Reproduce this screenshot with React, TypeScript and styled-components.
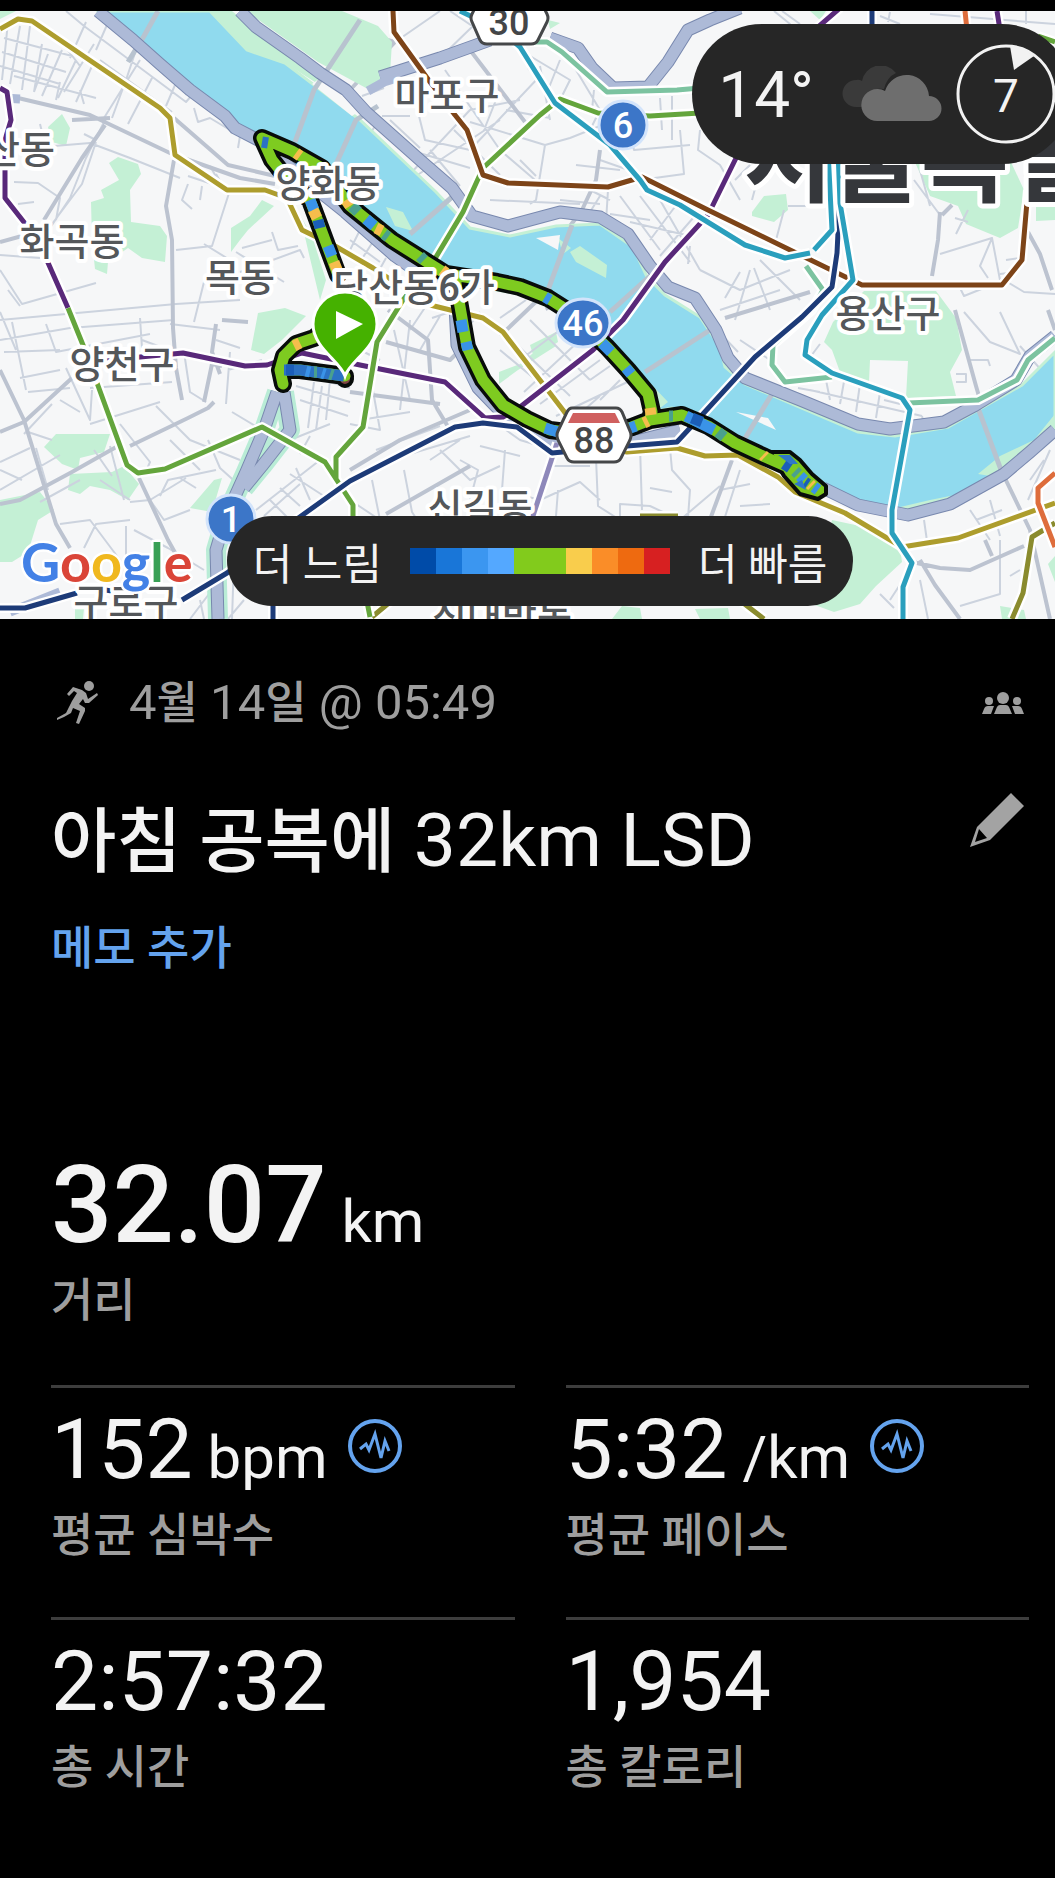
import React from "react";
import styled, { createGlobalStyle } from "styled-components";

type Stroke = { color: string; d: string };

const parks = [
  "M48 127 L62 114 L70 128 L66 146 L52 142Z",
  "M109 163 L118 157 L138 164 L141 174 L130 190 L131 222 L160 226 L167 236 L165 262 L142 258 L128 248 L108 262 L107 274 L95 269 L92 240 L91 202 L104 198 L101 190 L119 180Z",
  "M0 11 L16 11 L0 19Z",
  "M231 228 L250 216 L262 200 L274 206 L248 230 L240 240 L231 252Z",
  "M258 313 L285 308 L306 316 L282 340 L264 354 L251 350Z",
  "M300 215 L312 236 L326 280 L320 300 L308 250Z",
  "M44 447 L56 434 L110 434 L104 452 L80 458 L78 470 L62 464Z",
  "M70 474 L112 472 L124 466 L139 484 L128 500 L110 490 L90 486 L80 494 L68 490Z",
  "M0 500 L40 492 L54 510 L38 520 L28 552 L12 562 L0 562Z",
  "M190 508 L214 480 L222 478 L212 512Z",
  "M548 20 L560 23 L550 29Z",
  "M499 372 L520 364 L550 339 L556 346 L518 370 L499 384Z M530 345 L556 332 L558 342 L534 358Z",
  "M752 212 L764 196 L786 194 L788 210 L774 222 L752 216Z",
  "M914 160 L1010 160 L1024 190 L1018 228 L1000 238 L966 224 L958 206 L930 196Z",
  "M1036 206 L1055 204 L1055 220 L1036 221Z",
  "M864 291 L936 291 L956 318 L962 350 L950 372 L956 396 L906 398 L908 361 L870 360 L869 382 L840 372 L832 350 L824 342 L833 322Z",
  "M832 520 L860 526 L900 548 L902 562 L876 586 L860 604 L834 612 L812 604Z",
  "M612 619 L622 606 L640 608 L642 619Z M695 609 L728 608 L730 619 L700 619Z",
  "M1000 606 L1024 610 L1026 619 L1002 619Z M1048 564 L1055 556 L1055 582Z",
  "M810 11 L826 11 L820 20Z M75 606 L84 608 L83 619 L75 619Z",
];

const riverside = [
  "M210 11 L228 30 L247 50 L285 63 L318 84 L325 80 L300 60 L255 30 L232 11Z",
  "M246 11 L342 11 L378 26 L392 42 L390 74 L366 88 L318 62Z",
  "M570 252 L580 246 L607 265 L606 278 L576 262Z M558 238 L571 248 L563 254Z",
  "M386 207 L403 212 L413 231 L395 226Z",
  "M651 384 L668 402 L655 412Z",
  "M978 474 L1000 456 L1034 440 L1055 414 L1055 432 L1028 453 L990 476Z",
  "M896 508 L930 500 L960 494 L946 504 L908 513Z",
];

const sandbars =
  "M536 238 L560 235 L558 250Z M736 412 L768 418 L776 430Z M946 500 L960 492 L972 486 L962 500Z M312 84 L320 78 L358 112 L352 116Z";

const river =
  "M98 11 L140 46 L190 92 L235 126 L262 140 L300 172 L345 205 L400 254 L450 282 L520 294 L560 312 L610 355 L652 412 L672 408 L706 424 L765 456 L822 488 L858 508 L908 514 L948 504 L1002 474 L1028 454 L1055 433 L1055 352 L1022 385 L978 410 L948 427 L895 436 L858 432 L745 384 L725 367 L720 347 L700 317 L665 295 L647 277 L633 247 L600 224 L556 226 L510 236 L470 228 L436 192 L360 120 L318 88 L285 63 L247 50 L228 30 L210 11Z";

const highways = [
  "M98 11 L133 40 L160 64 L190 90 L225 116 L235 128 L262 142 L300 176 L345 212 L395 256 L440 288",
  "M240 11 L256 27 L300 58 L320 73 L346 90 L366 112 L420 160 L452 188 L472 216 L508 226 L560 212 L600 217 L628 234 L650 266 L668 287 L695 298 L716 330 L728 358 L745 378 L800 400 L858 424 L890 429 L944 422 L974 406 L1016 380 L1030 356 L1055 336",
  "M380 77 L440 58 L490 40",
  "M550 38 L578 48 L592 68 L613 88 L648 87 L668 62 L688 30 L710 20 L740 8",
  "M455 305 L457 345 L478 388 L505 416 L550 440 L590 448 L640 440 L680 430",
  "M823 488 L858 505 L908 515 L950 504 L1004 474 L1030 452 L1055 430",
];

const streamRoads = [
  "M277 392 L264 430 L246 472 L226 516 L216 550 L218 619",
  "M284 392 L290 430 L262 466 L244 488",
];

// arterial streets
const mediumRoads =
  "M18 98 L90 115 L172 154 L240 178 L275 184 M174 118 L228 165 L275 176 M105 125 L82 158 L44 220 M174 160 L166 206 L172 240 L173 328 L176 368 L182 400 M0 242 L22 236 M0 432 L24 422 L72 378 M0 370 L24 420 L56 524 L70 548 M0 504 L20 500 L72 472 L118 446 M139 478 L168 540 L178 558 M72 120 L110 118 M130 446 L188 418 L208 408 L214 402 M216 324 L212 352 L220 374 M222 320 L248 322 M204 402 L212 364 L222 366 M350 90 L395 42 L350 30 M600 150 L596 180 L582 210 L570 226 L548 286 M470 50 L525 122 M500 336 L543 295 L548 310 M350 470 L400 440 L470 410 M350 392 L440 404 M388 310 L428 340 L432 400 L450 430 M386 342 L450 360 L460 350 M386 514 L470 466 M695 560 L732 460 M940 212 L938 240 L932 276 M942 215 L952 205 M955 310 L976 386 L1000 468 L1030 530 L1050 619 M912 562 L940 568 L970 570 L1024 546 M920 560 L935 585 L960 619 M985 540 L992 556 M725 318 L810 292 M1028 232 L1040 254 L1052 290 M1048 310 L1055 330";

const minorRoads = [
  // northwest blocks
  "M8 22 L2 80 M20 26 L10 84 M30 26 L22 90 M42 44 L34 92 M4 38 L72 56 M2 52 L66 72 M0 66 L60 84 M14 76 L96 98 M48 54 L34 92 M62 50 L42 96 M76 60 L58 98 M92 66 L76 102 M86 22 L70 58 M60 40 L80 66 M94 44 L64 92 M66 11 L84 26 L186 102 L192 95 M110 18 L96 50 M128 28 L150 34 M140 60 L104 118 M152 78 L128 124 M136 50 L126 80 L112 118 M100 60 L172 112 M178 78 L166 106 M60 82 L56 100 M80 90 L84 104",
  "M54 146 L90 143 L130 158 L180 178 M104 122 L86 158 L70 198 L42 240 M14 182 L38 183 L60 198 L56 220 M18 204 L34 202 M40 124 L42 132 M84 134 L96 140 M96 142 L82 184 L52 224 M0 255 L40 258 M0 270 L22 304 L96 283 M0 312 L16 350 M8 290 L20 306",
  "M194 108 L198 122 L210 118 L240 136 L238 148 M188 176 L230 190 L212 246 L176 250 M188 184 L182 200 L192 209 M202 186 L200 200 M210 166 L218 180 M216 174 L224 188 M204 244 L230 260 M236 252 L284 282 M242 248 L272 240 M240 272 L300 250 L304 258 M250 262 L262 268 M206 274 L194 322 M272 232 L278 250 L298 246",
  // west side
  "M0 320 L176 304 L240 300 M0 340 L70 328 L174 320 M12 322 L26 390 M46 324 L56 352 L150 334 M80 330 L84 360 M140 318 L142 348 M4 352 L60 350 M66 368 L90 420 L92 390 M20 378 L60 370 M28 392 L70 388 M90 388 L172 382 M90 424 L160 402 M142 340 L190 358 M170 324 L220 330 M184 352 L190 392 L206 402 M216 340 L240 348 M230 352 L226 404 M24 434 L52 404 M28 432 L52 440 M60 400 L80 412 M120 424 L150 462 L144 476 M156 406 L190 440 L240 460",
  "M0 462 L30 448 M0 490 L60 455 M36 448 L48 490 M0 470 L22 480 M40 502 L80 480 M60 524 L90 520 L120 560 M84 548 L96 524 L130 520 M126 526 L126 560 M130 502 L150 500 L186 478 M150 500 L164 520 L190 510 M160 496 L168 480 L216 470 M134 530 L168 548 L204 570 M100 480 L130 500 M94 450 L112 476 M110 446 L124 500 M208 440 L220 468 L240 486 M170 440 L200 470 M180 478 L196 488",
  "M232 412 L262 430 M228 370 L262 360 M296 372 L350 388 M296 386 L350 402 M300 400 L348 416 M314 382 L308 428 M322 386 L316 430 M330 380 L326 420 M290 440 L330 424 M300 454 L310 436 M256 510 L320 460 M264 516 L300 484 M270 500 L290 520 M280 488 L300 506 M290 474 L330 500 M296 468 L310 500 M236 520 L248 540 M234 560 L232 619 M244 600 L228 619 M190 619 L212 590 M200 600 L204 619",
  // north
  "M410 80 L425 140 L470 150 L540 76 M395 190 L470 110 L520 100 M382 116 L410 116 M410 180 L500 120 M445 70 L500 150 L535 180 M362 96 L384 88 M530 56 L570 80 L560 100 M560 60 L548 90 L528 68 M470 122 L545 145 L570 138 L600 126 M545 145 L536 200 L530 204 M500 90 L484 130 M490 200 L580 204 M520 160 L536 176 M540 66 L550 120 M398 40 L440 11 M440 58 L475 24 M484 34 L450 11 M570 60 L600 110 L590 130",
  "M416 152 L470 168 M430 150 L460 186 M360 150 L380 118 M420 148 L390 120 M454 130 L500 175 M506 110 L550 118 M592 110 L594 90 M626 116 L634 150 L690 145 M660 98 L662 130 M680 130 L684 174 L640 180 M672 96 L672 140 M600 160 L640 174 M576 165 L620 170 M590 190 L610 200 M560 200 L600 204 M608 190 L606 222 M620 196 L660 250 M640 196 L690 262 M660 200 L700 270 M680 200 L650 240 M700 210 L660 256 M630 222 L690 236 M610 214 L650 220 M690 246 L688 264 M585 220 L600 196",
  "M760 46 L790 24 L774 11 M782 11 L800 24 M880 16 L900 24 M890 12 L888 22 M930 14 L1055 24 M1026 11 L1026 24 M700 130 L698 150 L720 165 L740 200 M750 165 L735 180 M760 170 L752 200",
  // east
  "M788 206 L832 206 M784 210 L776 240 M700 270 L740 290 L790 270 M725 298 L740 272 M754 268 L770 310 M760 260 L800 300 M720 310 L780 290 M735 320 L750 270 M914 180 L940 215 M955 218 L968 222 M940 254 L992 238 L980 266 L988 278 M992 238 L1000 280 M1000 274 L1016 272 M1006 260 L1020 258 M920 170 L930 206 M968 210 L956 234 M958 284 L964 296 L1004 280 L1024 292 L1055 294",
  "M964 312 L990 342 L1020 354 L1000 312 M968 360 L988 360 L990 366 M1020 346 L1050 380 M956 374 L966 374 L966 382 L956 382 M700 312 L738 352 M740 340 L770 360 L786 330 M820 344 L808 360 M798 388 L820 392 M826 380 L830 400 M845 376 L840 404 M860 384 L856 412 M880 392 L876 418 M810 390 L922 416 M922 416 L924 424 M884 400 L900 404",
  "M970 510 L990 540 M976 520 L1002 510 M980 530 L1006 522 M990 500 L1000 536 M924 520 L928 548 M1000 540 L1000 594 L960 606 M880 594 L894 608 M890 600 L916 560 M920 580 L928 619 M1028 500 L1050 450 M1020 570 L1010 576 M1030 480 L1044 460",
  // south
  "M460 440 L430 460 M376 450 L440 426 M390 460 L470 436 M404 470 L412 512 L430 540 M440 450 L470 480 L500 466 M470 500 L478 470 L460 460 M506 430 L520 440 L540 446 M505 450 L502 490 L540 500 L580 482 L600 500 M546 466 L590 466 M558 490 L556 516 M596 458 L598 506 L620 520 L620 504 L650 506 L680 520 L720 486 M640 446 L642 510 M670 448 L672 470 L690 490 L688 518 M672 492 L650 488 M720 490 L750 484 M740 470 L724 520 M764 450 L780 480 M740 506 L770 504 M480 446 L520 456 M350 500 L380 520 L372 480",
  "M350 345 L380 360 M372 385 L380 430 L350 424 M394 330 L410 400 M410 320 L400 410 M360 420 L410 412 M440 316 L420 350 M500 350 L560 400 M512 340 L570 396 M530 320 L590 380 M524 392 L580 340 M540 404 L600 360 M520 360 L560 330 M576 320 L612 356 M590 380 L610 366 M556 416 L640 376 M568 424 L600 396 M600 400 L620 380 M430 300 L410 330 M450 312 L432 318 M480 312 L466 330 M526 300 L500 318",
  "M350 240 L380 262 M360 230 L350 250 M374 240 L360 262 M386 258 L376 276 M370 262 L400 280 M400 300 L420 280",
];

const bridges =
  "M158 11 L144 36 L128 62 M360 20 L314 90 L295 142 M378 106 L356 120 L336 164 M460 190 L410 234 M572 225 L548 290 M610 312 L650 276 M645 372 L710 330 M772 394 L744 440 M978 408 L1004 478";

const rails: Stroke[] = [
  { color: "#ad9d2d", d: "M0 29 L18 19 L32 21 L160 108 L170 118 L175 155 L227 190 L265 190 L287 198 L302 230 L335 246 L373 268 L430 305 L483 318 L503 332 L563 410 L585 440 L627 452 L677 448 L705 456 L738 455 L778 477 L795 492 L845 513 L902 547 L958 538 L1055 503" },
  { color: "#8a8b2e", d: "M1055 523 L1032 537 L1023 593 L1012 619 M742 602 L764 619 M372 617 L390 602 M640 516 L678 516" },
  { color: "#59297a", d: "M0 88 L7 92 L11 120 L5 140 L5 198 L38 240 L68 308 M95 362 L140 357 L183 353 L245 366 L267 365 L302 353 L360 365 L445 382 L485 418 L503 417 L520 407 L593 350 L623 320 L665 262 L708 215 L740 150 L780 60 L840 8 M997 11 L1000 30" },
  { color: "#64a53c", d: "M68 308 L85 350 L127 465 L138 473 L165 469 L262 427 L325 462 L353 505 L353 530 L370 617 M700 113 L650 116 L598 113 L560 99 L540 115 L483 168 L463 212 L433 262 L403 300 L377 342 L363 427 L336 457 L336 478 M1038 36 L1055 42" },
  { color: "#7d4418", d: "M393 11 L394 32 L430 82 L455 115 L467 130 L483 175 L508 183 L608 187 L642 177 L708 210 L862 285 L1002 285 L1022 260 L1028 190" },
  { color: "#7cc3a0", d: "M530 42 L547 42 L562 52 L607 92 L677 90 L700 88 M806 266 L823 290 L812 310 L773 345 L772 365 L785 382 L832 377 M908 403 L978 400 L1017 380 L1028 360 L1055 338" },
  { color: "#8e88ba", d: "M557 443 L530 525" },
  { color: "#de6d3c", d: "M1055 473 L1038 488 L1038 503 L1055 547 M965 11 L968 40" },
  { color: "#1d3b78", d: "M842 150 L837 253 L832 287 L802 317 L755 357 L702 415 L677 442 L627 446 L552 453 L517 427 L483 423 L455 427 L350 481 L290 524 L227 573 L182 600 M77 593 L25 608 L0 608 M273 600 L273 619 M872 11 L872 40 M105 590 L112 591" },
  { color: "#2a9fbd", d: "M460 11 L500 30 L520 47 L555 103 L610 145 L640 180 L647 190 L680 205 L745 245 L785 258 L810 253 M814 250 L832 230 L828 150 M838 150 L840 203 L853 280 L822 315 L807 340 L805 355 L832 373 L902 398 L910 410 L892 510 L892 533 L912 563 L903 587 L903 619" },
];

const routeLines = [
  "M344 314 L314 338 L296 344 L284 356 L280 370 L283 384",
  "M284 370 L300 370 L345 376",
  "M338 275 L322 232 L310 200 L288 180 L272 160 L262 138 L292 151 L322 168 L350 206 L392 240 L446 274 L497 282 L520 287 L548 298 L570 312 L607 347 L628 370 L648 394 L652 412 L650 418",
  "M455 278 L462 318 L467 347 L483 380 L503 405 L527 419 L550 430 L600 436 L632 427 L650 420 L682 415 L708 426 L735 443 L765 457 L790 468 L812 486 L817 489",
];

const routePaces: Stroke[] = [
  { color: "#2b72c4", d: "M262 142 L268 143 M284 370 L300 370 L344 376" },
  { color: "#3a93e8", d: "M310 200 L314 210 M328 246 L332 256 M330 178 L336 186 M366 219 L374 226 M461 320 L463 332 M466 342 L468 350 M545 297 L550 300 M602 343 L611 352 M626 368 L631 374 M545 428 L558 432 M630 428 L636 426 M686 416 L714 430 M800 476 L804 480 M814 487 L818 490 M306 371 L310 372 M322 373 L325 374" },
  { color: "#1b5eb8", d: "M318 220 L320 228 M692 418 L702 422 M784 464 L790 468 M805 482 L808 484 M286 370 L294 370" },
  { color: "#f6bd4c", d: "M313 210 L317 218 M334 262 L338 272 M296 153 L300 156 M346 200 L350 206 M294 346 L300 343 M376 228 L382 231 M650 408 L651 415 M644 423 L648 421 M763 455 L765 457 M442 270 L446 273 M810 484 L812 486" },
  { color: "#4aa08e", d: "M352 206 L358 212 M384 234 L388 237 M669 416 L673 416 M718 432 L724 437 M795 471 L798 474 M420 256 L424 260 M322 170 L326 174 M314 372 L317 372 M330 374 L333 375" },
];

const places = [
  { name: "마포구", x: 447, y: 109 },
  { name: "산동", x: 20, y: 163 },
  { name: "양화동", x: 328, y: 197 },
  { name: "화곡동", x: 72, y: 255 },
  { name: "목동", x: 240, y: 291 },
  { name: "당산동6가", x: 414, y: 301 },
  { name: "용산구", x: 888, y: 327 },
  { name: "양천구", x: 122, y: 378 },
  { name: "신길동", x: 480, y: 521 },
  { name: "구로구", x: 126, y: 616 },
  { name: "신대방동", x: 502, y: 630 },
];

const routeShields = [
  { label: "6", x: 623, y: 125, rx: 24 },
  { label: "46", x: 583, y: 323, rx: 27 },
  { label: "1", x: 231, y: 519, rx: 24 },
];

const googleLetters = [
  ["G", "#4381e6"],
  ["o", "#da4538"],
  ["o", "#f0b81e"],
  ["g", "#4381e6"],
  ["l", "#38a055"],
  ["e", "#da4538"],
];

const paceColors = [
  "#004ba8",
  "#1976d8",
  "#3b96f0",
  "#54a8ff",
  "#82cb1c",
  "#82cb1c",
  "#f9cd4c",
  "#fa8d28",
  "#ee6a10",
  "#d72021",
];

const RouteMap: React.FC = () => (
  <MapDrawing viewBox="0 11 1055 608" preserveAspectRatio="xMidYMid slice">
    <rect y="11" width="1055" height="608" fill="#f6f7f8" />
    <path d={parks.join(" ")} fill="#c4f0d5" />
    <RoadPath d={minorRoads.join(" ")} $color="#ccd3de" $width={2} />
    <RoadPath d={mediumRoads} $color="#bcc3d0" $width={4} />
    <path d={river} fill="#90daee" stroke="#c4f0d5" strokeWidth="3" />
    <path d={riverside.join(" ")} fill="#c4f0d5" />
    <path d={sandbars} fill="#f6f7f8" />
    <RoadPath d={bridges} $color="#b8c3cf" $width={5} />
    <RoadPath d={streamRoads.join(" ")} $color="#b9ecd6" $width={20} />
    <RoadPath d={[...highways, ...streamRoads].join(" ")} $color="#7888ae" $width={13} />
    <RoadPath d={[...highways, ...streamRoads].join(" ")} $color="#adbad7" $width={11} />
    <RoadPath d="M368 91 L384 82 L400 77 M60 592 L10 612 M4 98 L20 99" $color="#adbad7" $width={9} />

    {rails.map(({ color, d }) => (
      <React.Fragment key={color}>
        <RoadPath d={d} $color="#ffffff" $width={10} />
        <RoadPath d={d} $color={color} $width={5} />
      </React.Fragment>
    ))}

    <RoutePath d={routeLines.join(" ")} stroke="#080c0a" strokeWidth="18" />
    <path
      d="M770 452 L790 452 L800 460 L812 474 L826 486 L826 494 L818 499 L800 494 L784 476Z"
      fill="#7cc71e"
      stroke="#080c0a"
      strokeWidth="4"
      strokeLinejoin="round"
    />
    <circle cx="345" cy="379" r="7" fill="#7f4444" stroke="#080c0a" strokeWidth="4" />
    <RoutePath d={routeLines.join(" ")} stroke="#7ecb20" strokeWidth="11" />
    {routePaces.map(({ color, d }) => (
      <PacePath key={color} d={d} stroke={color} />
    ))}
    <path d="M778 455 L790 455 L798 464 L790 464Z M794 484 L802 480 L806 490Z" fill="#2f78c8" />

    <CityLabel x="744" y="194">
      서울특별시
    </CityLabel>
    {places.map(({ name, x, y }) => (
      <PlaceLabel key={name} x={x} y={y}>
        {name}
      </PlaceLabel>
    ))}

    {routeShields.map(({ label, x, y, rx }) => (
      <g key={label}>
        <ellipse cx={x} cy={y} rx={rx} ry="24" fill="#3c76c8" stroke="#d3e4fb" strokeWidth="3" />
        <ShieldText x={x} y={y + 13} $color="#ffffff">
          {label}
        </ShieldText>
      </g>
    ))}

    <HexShield d="M482 2 L536 2 Q541 2 543 6 L547 14 Q549 18 547 22 L538 40 Q536 44 531 44 L487 44 Q482 44 480 40 L472 22 Q470 18 472 14 L476 6Z" />
    <ShieldText x={509} y={35} $color="#444648">
      30
    </ShieldText>
    <HexShield d="M572 408 L616 408 Q620 408 622 412 L630 431 Q632 435 630 440 L621 458 Q619 462 614 462 L574 462 Q569 462 567 458 L558 440 Q556 435 558 431 L567 412 Q569 408 572 408Z" />
    <path d="M573 413 L615 413 L620 423 L568 423Z" fill="#d0605f" />
    <ShieldText x={594} y={453} $color="#444648">
      88
    </ShieldText>

    <path
      d="M345 376 C340 361 313 348 313 324 A32 32 0 0 1 377 324 C377 348 350 361 345 376Z"
      fill="#45b100"
      stroke="#ffffff"
      strokeWidth="3"
    />
    <path d="M336 311 L363 324 L336 339Z" fill="#ffffff" />

    <GoogleMark x="21" y="582">
      {googleLetters.map(([letter, color], i) => (
        <tspan key={i} fill={color}>
          {letter}
        </tspan>
      ))}
    </GoogleMark>
  </MapDrawing>
);

const CloudIcon: React.FC = () => (
  <svg width="100" height="56" viewBox="0 0 100 56" aria-hidden="true">
    <path
      d="M14 41 A13.5 13.5 0 0 1 14 14 Q17 13 20 15 A19 19 0 0 1 54 7 Q45 11 42 23 Q24 20 20 41Z"
      fill="#3a3a3a"
    />
    <path
      d="M36 55 A16 16 0 1 1 43 25 A22.500 22.500 0 0 1 87 30 A12.500 12.500 0 1 1 87 55Z"
      fill="#6e6e6e"
    />
  </svg>
);

const WindIcon: React.FC = () => (
  <svg width="100" height="100" viewBox="0 0 100 100" aria-hidden="true">
    <circle cx="50" cy="50" r="48" fill="none" stroke="#f2f2f2" strokeWidth="3" />
    <path d="M54 2 Q68 4 78 12 L58 26Z" fill="#f2f2f2" />
  </svg>
);

const RunnerIcon: React.FC = () => (
  <svg width="42" height="44" viewBox="0 0 42 44" fill="#9e9e9e" aria-hidden="true">
    <circle cx="32" cy="5" r="5" />
    <path d="M16 6 L25 9 L29 12 L31 18 L40 12 L41 14 L32 22 L28 22 L26 18 L22 23 L28 27 L28 30 L22 43 L19 42 L23 30 L16 27 L14 32 L7 36 L0 39 L0 37 L9 32 L12 26 L15 20 L20 12 L17 10 L12 15 L10 13Z" />
  </svg>
);

const GroupIcon: React.FC = () => (
  <svg width="42" height="22" viewBox="0 0 42 22" fill="#9e9e9e" aria-hidden="true">
    <circle cx="21" cy="6" r="6" />
    <circle cx="7" cy="9" r="4" />
    <circle cx="35" cy="9" r="4" />
    <path d="M12 22 L15 15 Q16 13 18 13 L24 13 Q26 13 27 15 L30 22Z" />
    <path d="M0 22 L2 17 Q3 14 6 14 L12 14 L9 22Z M42 22 L40 17 Q39 14 36 14 L30 14 L33 22Z" />
  </svg>
);

const PencilIcon: React.FC = () => (
  <svg width="54" height="54" viewBox="0 0 54 54" aria-hidden="true">
    <path
      fillRule="evenodd"
      d="M41 0 L54 13 L20 47 L0 54 L7 34Z M9 36 L5 49 L17 45Z"
      fill="#a3a3a3"
    />
  </svg>
);

const PulseIcon: React.FC = () => (
  <svg width="54" height="54" viewBox="0 0 54 54" fill="none" stroke="#64a3ee" aria-hidden="true">
    <circle cx="27" cy="27" r="25" strokeWidth="4" />
    <path d="M12 30 L18 25 L21 31 L27 15 L33 39 L37 22 L41 32" strokeWidth="3" />
  </svg>
);

type MetricProps = {
  value: string;
  unit?: string;
  label: string;
  chart?: boolean;
};

const Metric: React.FC<MetricProps> = ({ value, unit, label, chart }) => (
  <MetricCell>
    <ValueRow>
      <Value>
        {value}
        {unit && <Unit> {unit}</Unit>}
      </Value>
      {chart && (
        <ChartButton type="button" aria-label={`${label} 그래프`}>
          <PulseIcon />
        </ChartButton>
      )}
    </ValueRow>
    <MetricLabel>{label}</MetricLabel>
  </MetricCell>
);

const App: React.FC = () => {
  return (
    <Screen>
      <GlobalStyle />
      <MapPanel>
        <RouteMap />
        <WeatherChip>
          <Temperature>14°</Temperature>
          <CloudIcon />
          <WindGauge>
            <WindIcon />
            <WindSpeed>7</WindSpeed>
          </WindGauge>
        </WeatherChip>
        <LegendArea>
          <Legend>
            <span>더 느림</span>
            <PaceScale>
              {paceColors.map((color, i) => (
                <PaceStep key={i} $color={color} />
              ))}
            </PaceScale>
            <span>더 빠름</span>
          </Legend>
        </LegendArea>
      </MapPanel>

      <Summary>
        <DateRow>
          <RunnerIcon />
          <DateText>
            4<Hangul $size={45}>월</Hangul> 14<Hangul $size={45}>일</Hangul> @ 05:49
          </DateText>
          <IconButton type="button" aria-label="공개 설정">
            <GroupIcon />
          </IconButton>
        </DateRow>
        <TitleRow>
          <Title>
            <Hangul $size={71}>아침 공복에</Hangul> 32km LSD
          </Title>
          <IconButton type="button" aria-label="제목 편집">
            <PencilIcon />
          </IconButton>
        </TitleRow>
        <MemoLink href="#memo">메모 추가</MemoLink>

        <Distance>
          <DistanceValue>
            32.07<Unit> km</Unit>
          </DistanceValue>
          <MetricLabel>거리</MetricLabel>
        </Distance>
        <MetricGrid>
          <Metric value="152" unit="bpm" label="평균 심박수" chart />
          <Metric value="5:32" unit="/km" label="평균 페이스" chart />
          <Metric value="2:57:32" label="총 시간" />
          <Metric value="1,954" label="총 칼로리" />
        </MetricGrid>
      </Summary>
    </Screen>
  );
};

export default App;

const GlobalStyle = createGlobalStyle`
  body {
    margin: 0;
    background-color: #000000;
  }
`;

const Screen = styled.main`
  min-height: 100vh;
  padding-top: 11px;
  box-sizing: border-box;
  overflow: hidden;
  background-color: #000000;
  color: #f3f3f3;
  font-family: Roboto, "Noto Sans CJK KR", sans-serif;
`;

const MapPanel = styled.section`
  position: relative;
  overflow: hidden;
`;

const MapDrawing = styled.svg`
  display: block;
  width: 100%;
  aspect-ratio: 1055 / 608;
`;

const RoadPath = styled.path<{ $color: string; $width: number }>`
  fill: none;
  stroke: ${(props) => props.$color};
  stroke-width: ${(props) => props.$width};
  stroke-linejoin: round;
`;

const RoutePath = styled.path`
  fill: none;
  stroke-linejoin: round;
  stroke-linecap: round;
`;

const PacePath = styled.path`
  fill: none;
  stroke-width: 11;
`;

const MapText = styled.text`
  font-family: Roboto, "Noto Sans CJK KR", sans-serif;
  paint-order: stroke;
  stroke: #ffffff;
  stroke-linejoin: round;
`;

const PlaceLabel = styled(MapText)`
  font-size: 38px;
  font-weight: 500;
  text-anchor: middle;
  fill: #54575a;
  stroke-width: 8;
`;

const CityLabel = styled(MapText)`
  font-size: 96px;
  font-weight: 700;
  fill: #35373b;
  stroke-width: 10;
`;

const ShieldText = styled.text<{ $color: string }>`
  font-family: Roboto, sans-serif;
  font-size: 36px;
  font-weight: 500;
  text-anchor: middle;
  fill: ${(props) => props.$color};
`;

const HexShield = styled.path`
  fill: #ffffff;
  stroke: #454749;
  stroke-width: 3;
`;

const GoogleMark = styled(MapText)`
  font-family: Lato, sans-serif;
  font-size: 54px;
  font-weight: 700;
  stroke-width: 5;
`;

const WeatherChip = styled.div`
  position: absolute;
  top: 13px;
  right: -17px;
  height: 140px;
  display: flex;
  align-items: center;
  padding: 0 16px 0 26px;
  border-radius: 70px;
  background-color: #262626;
`;

const Temperature = styled.span`
  margin-right: 28px;
  padding-top: 4px;
  font-size: 64px;
  line-height: 72px;
`;

const WindGauge = styled.div`
  display: grid;
  margin-left: 14px;
  place-items: center;

  > * {
    grid-area: 1 / 1;
  }
`;

const WindSpeed = styled.span`
  padding-top: 4px;
  font-size: 46px;
  line-height: 48px;
`;

const LegendArea = styled.div`
  position: absolute;
  bottom: 13px;
  left: 25px;
  right: 0;
  display: flex;
  justify-content: center;
`;

const Legend = styled.div`
  height: 90px;
  display: flex;
  align-items: center;
  gap: 28px;
  padding: 0 26px;
  border-radius: 45px;
  background-color: #262626;
  font-size: 43px;
  white-space: nowrap;
`;

const PaceScale = styled.div`
  display: flex;
`;

const PaceStep = styled.div<{ $color: string }>`
  width: 26px;
  height: 26px;
  background-color: ${(props) => props.$color};
`;

const Summary = styled.section`
  padding: 48px 26px 40px 51px;
`;

const IconButton = styled.button`
  display: flex;
  padding: 0;
  border: none;
  background: none;
  cursor: pointer;
`;

const ChartButton = styled(IconButton)`
  padding-bottom: 8px;
`;

const Hangul = styled.span<{ $size: number }>`
  font-size: ${(props) => props.$size}px;
  font-weight: 500;
  line-height: 1;
`;

const DateRow = styled.div`
  display: flex;
  align-items: center;
  padding: 0 5px 0 6px;
  color: #9e9e9e;
`;

const DateText = styled.span`
  flex: 1;
  margin-left: 30px;
  font-size: 49px;
  line-height: 72px;
`;

const TitleRow = styled.div`
  display: flex;
  align-items: flex-start;
  justify-content: space-between;
  margin-top: 54px;
  padding-right: 5px;
`;

const Title = styled.h1`
  margin: 0;
  font-size: 75px;
  font-weight: 400;
  line-height: 94px;
`;

const MemoLink = styled.a`
  display: block;
  width: fit-content;
  margin-top: 26px;
  color: #64a3ee;
  font-size: 46px;
  font-weight: 500;
  line-height: 70px;
  text-decoration: none;
`;

const Distance = styled.div`
  height: 240px;
  margin-top: 162px;
`;

const DistanceValue = styled.div`
  font-size: 108px;
  font-weight: 500;
  line-height: 120px;
`;

const MetricGrid = styled.div`
  display: grid;
  grid-template-columns: 1fr 1fr;
  column-gap: 51px;
`;

const MetricCell = styled.div`
  min-height: 232px;
  box-sizing: border-box;
  padding-top: 12px;
  border-top: 3px solid #3d3d3d;
`;

const ValueRow = styled.div`
  display: flex;
  align-items: center;
  gap: 20px;
`;

const Value = styled.div`
  font-size: 84px;
  line-height: 100px;
`;

const Unit = styled.span`
  font-size: 60px;
  font-weight: 400;
  line-height: 60px;
`;

const MetricLabel = styled.div`
  color: #9e9e9e;
  font-size: 46px;
  font-weight: 500;
  line-height: 70px;
`;
